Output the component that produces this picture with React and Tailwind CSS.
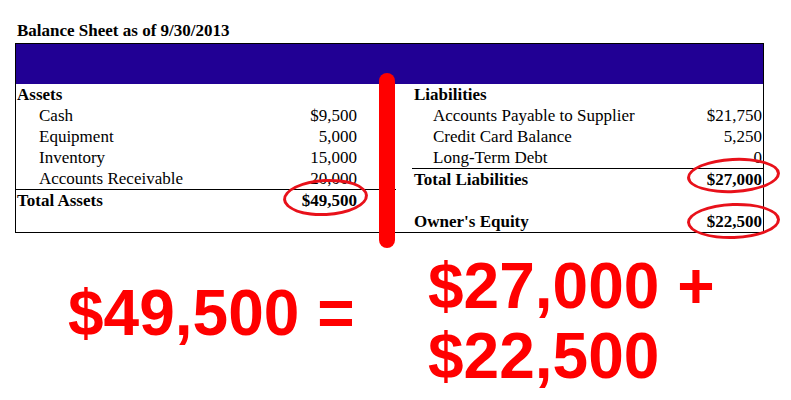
import React from "react";

const left = [
  { label: "Cash", value: "$9,500" },
  { label: "Equipment", value: "5,000" },
  { label: "Inventory", value: "15,000" },
  { label: "Accounts Receivable", value: "20,000" },
];

const right = [
  { label: "Accounts Payable to Supplier", value: "$21,750" },
  { label: "Credit Card Balance", value: "5,250" },
  { label: "Long-Term Debt", value: "0" },
];

function Row({ label, value, bold, indent, side }) {
  const pad =
    side === "left"
      ? indent
        ? "pl-[23px] pr-[39px]"
        : "pl-[1px] pr-[39px]"
      : indent
      ? "pl-[21px] pr-[1px]"
      : "pl-[2px] pr-[1px]";
  return (
    <div
      className={`flex justify-between h-[21px] pt-[1px] leading-[20px] ${pad} ${
        bold ? "font-bold" : ""
      }`}
    >
      <span>{label}</span>
      <span>{value}</span>
    </div>
  );
}

function Ring({ className }) {
  return (
    <div
      className={`absolute rounded-[50%] border-[3.5px] border-[#e8111a] ${className}`}
    />
  );
}

export default function App() {
  return (
    <div className="relative w-[791px] h-[400px] bg-white overflow-hidden">
      <div className="font-['Liberation_Serif','Times_New_Roman',serif] text-[17px] text-black">
        <div className="pt-[21px] pl-[17px] h-[43px] leading-[20px] font-bold">
          Balance Sheet as of 9/30/2013
        </div>
        <div className="ml-[15px] w-[749px] border border-black">
          <div className="h-[40px] bg-[#210094]" />
          <div className="flex">
            <div className="w-[380px]">
              <Row side="left" bold label="Assets" />
              {left.map((r) => (
                <Row key={r.label} side="left" indent {...r} />
              ))}
              <div className="h-px bg-black" />
              <Row side="left" bold label="Total Assets" value="$49,500" />
              <div className="h-[21px]" />
            </div>
            <div className="w-[16px]" />
            <div className="flex-1">
              <Row side="right" bold label="Liabilities" />
              {right.map((r) => (
                <Row key={r.label} side="right" indent {...r} />
              ))}
              <div className="h-px bg-black" />
              <Row side="right" bold label="Total Liabilities" value="$27,000" />
              <div className="h-[21px]" />
              <Row side="right" bold label="Owner's Equity" value="$22,500" />
            </div>
          </div>
        </div>
      </div>

      <div className="flex pl-[68px] font-['Liberation_Sans',Arial,sans-serif] font-bold text-[64px] leading-[70px] text-[#ff0000]">
        <div className="w-[360px] pt-[45px]">$49,500 =</div>
        <div className="pt-[18px]">
          <div>$27,000 +</div>
          <div>$22,500</div>
        </div>
      </div>

      <div className="absolute left-[379px] top-[73px] w-[16px] h-[175px] rounded-full bg-[#ff0000]" />
      <Ring className="left-[283px] top-[179px] w-[85px] h-[37px] -rotate-3" />
      <Ring className="left-[687px] top-[158px] w-[93px] h-[35px] -rotate-3" />
      <Ring className="left-[687px] top-[203px] w-[93px] h-[36px] -rotate-2" />
    </div>
  );
}
